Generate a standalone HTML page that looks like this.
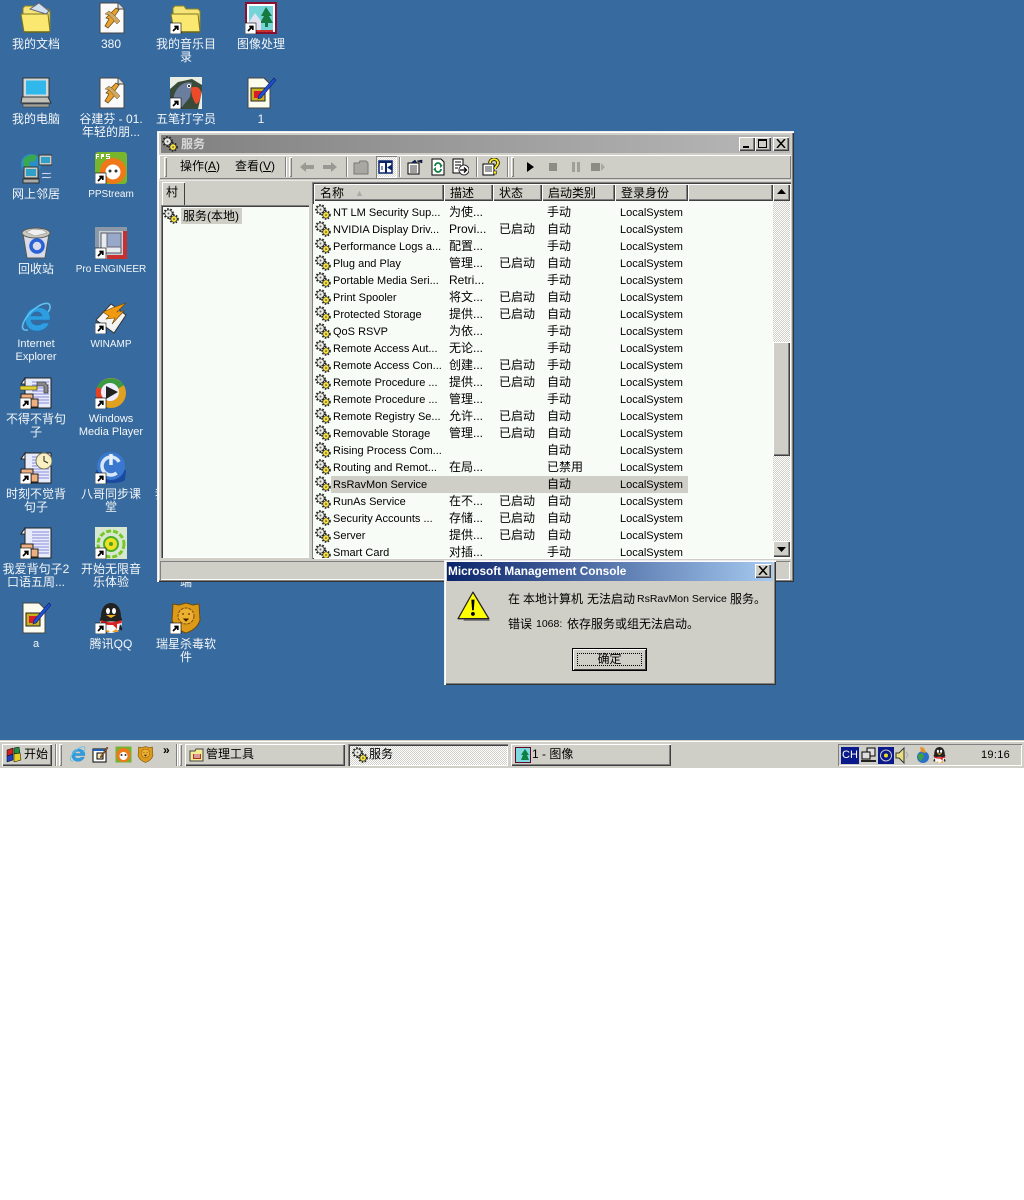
<!DOCTYPE html>
<html lang="zh"><head><meta charset="utf-8"><title>服务</title>
<style>
*{box-sizing:border-box}
html,body{margin:0;padding:0;background:#fff}
body{width:1024px;height:1200px;position:relative;overflow:hidden;font:11px/13px "Liberation Sans","WenQuanYi Zen Hei","Noto Sans CJK SC",sans-serif;color:#000}
.a{position:absolute}
#desk{left:0;top:0;width:1024px;height:740px;background:#376b9f}
.ic{position:absolute;width:74px;text-align:center;color:#f4f6f8;font-size:12px;line-height:13px}
.ic svg{position:absolute;left:21px;top:0;width:32px;height:32px}
.ic div{position:absolute;left:-2px;width:78px;top:36px;white-space:nowrap}
.up{background:#cfcfc7;box-shadow:inset 1px 1px 0 #fff,inset -1px -1px 0 #404040,inset -2px -2px 0 #808080}
.dn{box-shadow:inset 1px 1px 0 #808080,inset 2px 2px 0 #404040,inset -1px -1px 0 #fff}
#win{left:157px;top:131px;width:637px;height:451px;background:#cfcfc7;box-shadow:inset 1px 1px 0 #eee,inset 2px 2px 0 #fff,inset -1px -1px 0 #333,inset -2px -2px 0 #808080}
#tt{left:4px;top:4px;width:629px;height:18px;background:linear-gradient(90deg,#808080,#b8b8b8);color:#d8d8d8;font-weight:bold;font-size:12px;line-height:18px;padding-left:20px}
.wb{position:absolute;top:6px;width:16px;height:14px;font-size:0}
.grip{position:absolute;width:3px;height:20px;box-shadow:inset 1px 1px 0 #fff,inset -1px -1px 0 #808080}
.sep{position:absolute;width:2px;height:20px;box-shadow:inset 1px 0 0 #808080,inset -1px 0 0 #fff}
.tbi{position:absolute;width:18px;height:18px}
#list{left:156px;top:73px;width:460px;height:354px;overflow:hidden;background:#f8fcf6}
.r{position:relative;height:17px;font-size:11px;line-height:17px;white-space:nowrap}
.r svg{position:absolute;left:2px;top:0;width:16px;height:16px}
.r span{position:absolute;top:0}
.r .n,.r .l{top:1px}
.n{left:20px}.d{left:136px;font-size:12px}.s{left:186px;font-size:12px}.t{left:234px;font-size:12px}.l{left:307px}
.h{position:absolute;top:53px;height:17px;font-size:12px;line-height:18px;padding-left:6px;background:#cfcfc7;box-shadow:inset 1px 1px 0 #fff,inset -1px -1px 0 #404040,inset -2px -2px 0 #808080}
.sb{background:repeating-conic-gradient(#fff 0 25%,#d0d0c8 0 50%) 0 0/2px 2px}
#dlg{left:444px;top:560px;width:332px;height:125px;background:#cfcfc7;box-shadow:inset 1px 1px 0 #eee,inset 2px 2px 0 #fff,inset -1px -1px 0 #333,inset -2px -2px 0 #808080}
#dt{left:3px;top:2px;width:326px;height:19px;background:linear-gradient(90deg,#0a246a,#a6caf0);color:#fff;font-weight:bold;font-size:11.8px;line-height:19px;padding-left:1px}
.m{position:absolute;font-size:12px;white-space:nowrap;line-height:13px}
.m.e{font-size:10.5px}
#bar{left:0;top:740px;width:1024px;height:28px;background:#cfcfc7;box-shadow:inset 0 1px 0 #cfcfc7,inset 0 2px 0 #fff}
.task{position:absolute;top:4px;height:22px;font-size:12px;line-height:21px;padding-left:21px;white-space:nowrap}
.task svg{position:absolute;left:4px;top:3px;width:16px;height:16px}
.q{position:absolute;top:6px;width:17px;height:17px}
</style></head><body>
<svg width="0" height="0" style="position:absolute">
<defs>
<symbol id="g" viewBox="0 0 16 16"><circle cx="5.500" cy="5.500" r="4.400" fill="none" stroke="#222" stroke-width="2" stroke-dasharray="1.600 1.600"/><circle cx="5.500" cy="5.500" r="3.600" fill="#eeeee8" stroke="#333" stroke-width=".7"/><circle cx="5.500" cy="5.500" r="1" fill="#666"/><circle cx="11" cy="11" r="3.900" fill="none" stroke="#222" stroke-width="1.800" stroke-dasharray="1.500 1.400"/><circle cx="11" cy="11" r="3.200" fill="#f4e040" stroke="#333" stroke-width=".7"/><circle cx="11" cy="11" r=".8" fill="#333"/></symbol>
<symbol id="sc" viewBox="0 0 32 32"><rect x="0" y="21" width="11" height="11" fill="#fff" stroke="#000" stroke-width=".6"/><path d="M3 29l4-4M4.300 24.500h3.500v3.500" fill="none" stroke="#000" stroke-width="1.700"/></symbol>
<symbol id="fold" viewBox="0 0 32 32"><path d="M3 9V6l2-2h9l2 3h12l2 2v17H3z" fill="#f6e476" stroke="#8b8420"/><path d="M1 12h27l2 18H4z" fill="#fbe870" stroke="#7d7820"/><path d="M4 30h26" stroke="#6a6618" stroke-width="1.500"/></symbol>
<symbol id="doc" viewBox="0 0 32 32"><path d="M5 1h18l6 6v24H5z" fill="#fafafa" stroke="#444"/><path d="M23 1v6h6" fill="#ddd" stroke="#444"/><path d="M10 24l4-7-3-1 10-10 3 2-5 7 3 1-9 10z" fill="#eaa22e" stroke="#6a5020" stroke-width=".8"/><path d="M10 12l4 1 8 9 3-3-7-7-4-3z" fill="#d0a860" stroke="#6a5020" stroke-width=".5"/></symbol>
<symbol id="pic" viewBox="0 0 32 32"><rect x="1" y="1" width="30" height="30" fill="#fff" stroke="#8a1030" stroke-width="2"/><rect x="4" y="4" width="24" height="24" fill="#74d4d8"/><path d="M21 5l6 9h-3l4 7h-5v4h-3v-4h-5l4-7h-3z" fill="#167a40"/><path d="M4 20l6-9 6 8v9H4z" fill="#e0e0f0"/><rect x="4" y="28" width="24" height="2" fill="#c83030"/></symbol>
<symbol id="pc" viewBox="0 0 32 32"><path d="M3 1h26v19H3z" fill="#d4dad8" stroke="#333"/><rect x="6" y="3.500" width="20" height="14" fill="#30b8ea"/><path d="M2 20h26l3 6H1z" fill="#c0c0b8" stroke="#333"/><path d="M3 27h26v3H3z" fill="#a0a098" stroke="#333" stroke-width=".5"/></symbol>
<symbol id="bird" viewBox="0 0 32 32"><rect width="32" height="32" fill="#e8eee4"/><path d="M0 32V12L8 5l14-3 10 6v6l-4 18z" fill="#3a4a38"/><path d="M3 24C4 11 14 3 22 6l-2 14-8 10H3z" fill="#6c7e9e"/><path d="M21 11c5-3 11 0 10 7-1 5-3 9-5 9-3-4-5-10-5-16z" fill="#ec4a2a"/><circle cx="19" cy="9" r="2" fill="#ffe"/><circle cx="19" cy="9" r="1" fill="#000"/></symbol>
<symbol id="pen" viewBox="0 0 32 32"><path d="M3 1h16l6 6v24H3z" fill="#fbfbee" stroke="#444"/><path d="M6 11h14v13H6z" fill="#c8b020" stroke="#222"/><path d="M9 14h8v7H9z" fill="#dc1c28"/><path d="M13 22l3-1L31 3l-2-2-15 17z" fill="#2050d8" stroke="#102060" stroke-width=".6"/></symbol>
<symbol id="net" viewBox="0 0 32 32"><circle cx="11" cy="12" r="10" fill="#2a8ec8"/><path d="M3 8c4-5 10-7 14-4l-2 5-6 1 1 5-6 1z" fill="#3aa850"/><path d="M19 3h13v10H19z" fill="#c8ccc8" stroke="#333"/><rect x="21" y="5" width="9" height="6" fill="#30a0c8"/><path d="M4 15h14v11H4z" fill="#c8ccc8" stroke="#333"/><rect x="6" y="17" width="10" height="7" fill="#30a0c8"/><path d="M3 27h16v4H3z" fill="#aaa" stroke="#333"/><path d="M22 22c3-2 6 1 9-1M22 26c3-2 6 1 9-1" stroke="#dde" fill="none"/></symbol>
<symbol id="pps" viewBox="0 0 32 32"><rect width="32" height="32" rx="3" fill="#78b42c"/><circle cx="18" cy="19" r="13" fill="#f07818"/><circle cx="18" cy="20" r="7.500" fill="#fff"/><circle cx="15" cy="19" r="1.500" fill="#333"/><circle cx="21" cy="19" r="1.500" fill="#333"/><path d="M1 2h3v1H2v1h2v1H2v2H1zM6 2h3v3H7v2H6zM11 2h4v1h-3v1h3v3h-4V6h3V5h-3z" fill="#fff"/></symbol>
<symbol id="bin" viewBox="0 0 32 32"><path d="M3 7h26l-4 24H7z" fill="#d8dce8" stroke="#555"/><ellipse cx="16" cy="6" rx="14" ry="5" fill="#c8c8c0" stroke="#555"/><path d="M6 5l7-3 10 1 4 3-12 3z" fill="#f0f0f0" stroke="#888" stroke-width=".5"/><circle cx="17" cy="19" r="6" fill="none" stroke="#2a60d8" stroke-width="3.500"/></symbol>
<symbol id="pro" viewBox="0 0 32 32"><rect width="32" height="32" fill="#c6d0d8"/><path d="M0 0h32v4H4v28H0z" fill="#8a98a8"/><path d="M6 6h20v20H6z" fill="#e8ecee" stroke="#556"/><rect x="12" y="6" width="14" height="14" fill="#98a8c8" stroke="#667"/><path d="M28 4h4v28H12v-4h16z" fill="#c83030"/></symbol>
<symbol id="ie" viewBox="0 0 32 32"><path d="M25 18H11c0 5 7 7 12 3h6c-3 8-13 10-19 6C4 23 4 13 10 8c6-4 14-3 18 2 2 2 2 5 2 8zM11 14h11c0-5-9-6-11 0z" fill="#2e9ee0" fill-rule="evenodd" stroke="#1a70b8" stroke-width=".5"/><path d="M8 28C1 29 1 24 6 16 12 7 24-1 29 2c2 2 1 6-1 8" fill="none" stroke="#60c0f0" stroke-width="1.600"/></symbol>
<symbol id="wa" viewBox="0 0 32 32"><path d="M16 2l15 11-12 18L1 18z" fill="#f4f4f4" stroke="#333"/><path d="M31 1L17 6 8 10l6 4-3 3 9-1-3 6 12-13-7 1z" fill="#f09a10" stroke="#704000" stroke-width=".6"/></symbol>
<symbol id="sheet" viewBox="0 0 32 32"><path d="M5 1h26v30H5z" fill="#e8ecfa" stroke="#222"/><path d="M5 1L1 7h4z" fill="#fff" stroke="#222"/><path d="M12 5h17M12 8h17M12 11h17M12 14h17M12 17h17M12 20h17M12 23h17M12 26h17" stroke="#8888d8"/><rect x="1" y="17" width="12" height="7" fill="#eeb080" stroke="#222"/><rect x="11" y="22" width="7" height="8" fill="#eeb080" stroke="#222"/></symbol>
<symbol id="mp" viewBox="0 0 32 32"><circle cx="16" cy="16" r="15" fill="#e0a020"/><path d="M16 16L2 10C6 1 20-3 29 8z" fill="#3a9a40"/><path d="M16 16L2 10c-3 7 0 14 7 19z" fill="#e84020"/><circle cx="15" cy="15" r="9" fill="#eef"/><path d="M11 9l12 6-12 7z" fill="#222"/></symbol>
<symbol id="sync" viewBox="0 0 32 32"><path d="M1 18l2 10c6 4 22 4 27 0l1-10z" fill="#1a4aa0"/><circle cx="16" cy="14" r="14" fill="#3a78d0"/><circle cx="16" cy="14" r="9" fill="none" stroke="#d8e8f8" stroke-width="3.500" stroke-dasharray="44 12" stroke-dashoffset="-8"/><path d="M16 2v11" stroke="#e8f0fa" stroke-width="3.500"/></symbol>
<symbol id="music" viewBox="0 0 32 32"><rect width="32" height="32" fill="#d8e8d0"/><circle cx="16" cy="17" r="13" fill="none" stroke="#78c828" stroke-width="3" stroke-dasharray="5 2"/><circle cx="16" cy="17" r="7" fill="#f0e020" stroke="#48b028" stroke-width="2"/><circle cx="16" cy="17" r="2" fill="#48a028"/></symbol>
<symbol id="qq" viewBox="0 0 32 32"><ellipse cx="16" cy="20" rx="11" ry="11" fill="#f8f8f8"/><path d="M7 22C3 28 5 30 8 27zM25 22c4 6 2 8-1 5z" fill="#222"/><path d="M6 15C6 4 12 1 16 1s10 3 10 14c2 3 1 4-1 6-3-2-15-2-18 0-2-2-3-3-1-6z" fill="#222"/><ellipse cx="13" cy="9" rx="2" ry="3" fill="#fff"/><ellipse cx="19" cy="9" rx="2" ry="3" fill="#fff"/><path d="M11 13h10l-5 3z" fill="#f0b020"/><path d="M6 18c6 3 14 3 20 0l1 3-5 1v5l-4-4c-4 0-9 0-12-2z" fill="#d82020"/><path d="M8 30h7l-2-2zM17 30h7l-3-3z" fill="#f0a020"/></symbol>
<symbol id="lion" viewBox="0 0 32 32"><path d="M3 2l6 1 7-2 7 2 6-1 1 16c-2 7-8 11-14 13C10 29 4 25 2 18z" fill="#dc9a18" stroke="#6a4a10"/><circle cx="16" cy="14" r="8" fill="#eeb030" stroke="#7a5010" stroke-dasharray="3 1"/><path d="M12 12h2M18 12h2M14 17h4l-2 2z" stroke="#402000" fill="#402000"/></symbol>
<symbol id="warn" viewBox="0 0 32 32"><path d="M17 5l14 24H6z" fill="#777"/><path d="M15 2L1 27h29z" fill="#ff0" stroke="#222" stroke-width="1.200" stroke-linejoin="round"/><path d="M13.500 9h3l-.7 10h-1.600z" fill="#000"/><circle cx="15" cy="22.500" r="1.800" fill="#000"/></symbol>
<symbol id="fm" viewBox="0 0 16 16"><path d="M1 4h5l1-2h7v12H1z" fill="#f4ec90" stroke="#444"/><rect x="4" y="7" width="8" height="5" fill="#b03030"/><path d="M5 8h6M5 10h6" stroke="#fff"/></symbol>
<symbol id="ficon" viewBox="0 0 16 16"><rect x=".5" y=".5" width="15" height="15" fill="#80d8e0" stroke="#600828"/><path d="M10 2l4 6h-2l2 5H6l2-5H6z" fill="#108040"/></symbol>
</defs>
</svg>

<div id="desk" class="a"></div>

<div class="ic" style="left:-1px;top:2px"><svg><use href="#fold"/></svg><svg viewBox="0 0 32 32"><path d="M10 7l9-6 10 8-3 3z" fill="#cfe0f0" stroke="#667"/></svg><div>我的文档</div></div>
<div class="ic" style="left:74px;top:2px"><svg><use href="#doc"/></svg><div>380</div></div>
<div class="ic" style="left:149px;top:2px"><svg><use href="#fold"/><use href="#sc"/></svg><div>我的音乐目<br>录</div></div>
<div class="ic" style="left:224px;top:2px"><svg><use href="#pic"/><use href="#sc"/></svg><div>图像处理</div></div>

<div class="ic" style="left:-1px;top:77px"><svg><use href="#pc"/></svg><div>我的电脑</div></div>
<div class="ic" style="left:74px;top:77px"><svg><use href="#doc"/></svg><div>谷建芬 - 01.<br>年轻的朋...</div></div>
<div class="ic" style="left:149px;top:77px"><svg><use href="#bird"/><use href="#sc"/></svg><div>五笔打字员</div></div>
<div class="ic" style="left:224px;top:77px"><svg><use href="#pen"/></svg><div>1</div></div>

<div class="ic" style="left:-1px;top:152px"><svg><use href="#net"/></svg><div>网上邻居</div></div>
<div class="ic" style="left:74px;top:152px"><svg><use href="#pps"/><use href="#sc"/></svg><div style="font-size:10px">PPStream</div></div>

<div class="ic" style="left:-1px;top:227px"><svg><use href="#bin"/></svg><div>回收站</div></div>
<div class="ic" style="left:74px;top:227px"><svg><use href="#pro"/><use href="#sc"/></svg><div style="font-size:10px">Pro ENGINEER</div></div>

<div class="ic" style="left:-1px;top:302px"><svg><use href="#ie"/></svg><div style="font-size:11px">Internet<br>Explorer</div></div>
<div class="ic" style="left:74px;top:302px"><svg><use href="#wa"/><use href="#sc"/></svg><div style="font-size:10px">WINAMP</div></div>

<div class="ic" style="left:-1px;top:377px"><svg><use href="#sheet"/><use href="#sc"/></svg><svg viewBox="0 0 32 32"><path d="M0 9h17v4H0z" fill="#e0d030" stroke="#222" stroke-width=".6"/><path d="M17 5h8l3 4v7h-4V9h-7z" fill="#888" stroke="#222" stroke-width=".6"/></svg><div>不得不背句<br>子</div></div>
<div class="ic" style="left:74px;top:377px"><svg><use href="#mp"/><use href="#sc"/></svg><div style="font-size:11px">Windows<br>Media Player</div></div>

<div class="ic" style="left:-1px;top:452px"><svg><use href="#sheet"/><use href="#sc"/></svg><svg viewBox="0 0 32 32"><circle cx="24" cy="9" r="8" fill="#f8f0c0" stroke="#776"/><path d="M24 4v5l4 2" fill="none" stroke="#222"/></svg><div>时刻不觉背<br>句子</div></div>
<div class="ic" style="left:74px;top:452px"><svg><use href="#sync"/><use href="#sc"/></svg><div>八哥同步课<br>堂</div></div>
<div class="ic" style="left:149px;top:452px"><div style="left:6px;width:30px;text-align:left">我</div></div>

<div class="ic" style="left:-1px;top:527px"><svg><use href="#sheet"/><use href="#sc"/></svg><div>我爱背句子2<br>口语五周...</div></div>
<div class="ic" style="left:74px;top:527px"><svg><use href="#music"/><use href="#sc"/></svg><div>开始无限音<br>乐体验</div></div>
<div class="ic" style="left:149px;top:527px"><div style="top:49px">端</div></div>

<div class="ic" style="left:-1px;top:602px"><svg><use href="#pen"/></svg><div style="font-size:11px">a</div></div>
<div class="ic" style="left:74px;top:602px"><svg><use href="#qq"/><use href="#sc"/></svg><div>腾讯QQ</div></div>
<div class="ic" style="left:149px;top:602px"><svg><use href="#lion"/><use href="#sc"/></svg><div>瑞星杀毒软<br>件</div></div>

<div id="win" class="a">
 <div id="tt" class="a">服务</div>
 <svg class="a" style="left:5px;top:5px;width:16px;height:16px"><use href="#g"/></svg>
 <div class="wb up" style="left:582px"><div class="a" style="left:4px;top:9px;width:6px;height:2px;background:#000"></div></div>
 <div class="wb up" style="left:598px"><div class="a" style="left:3px;top:2px;width:9px;height:9px;border:1px solid #000;border-top-width:2px"></div></div>
 <div class="wb up" style="left:616px"><svg class="a" style="left:3px;top:2px;width:10px;height:9px" viewBox="0 0 10 9"><path d="M1 0l8 9M9 0L1 9" stroke="#000" stroke-width="1.500"/></svg></div>

 <div class="a" style="left:2px;top:24px;width:632px;height:24px;box-shadow:inset 1px 1px 0 #fff,inset -1px -1px 0 #808080"></div>
 <div class="grip" style="left:7px;top:26px"></div>
 <div class="a" style="left:23px;top:29px;font-size:12px;white-space:nowrap">操作(<u>A</u>)</div>
 <div class="a" style="left:78px;top:29px;font-size:12px;white-space:nowrap">查看(<u>V</u>)</div>
 <div class="sep" style="left:128px;top:26px"></div>
 <div class="grip" style="left:132px;top:26px"></div>
 <svg class="tbi" style="left:141px;top:27px" viewBox="0 0 18 18"><path d="M2 9l6-5v3h8v4H8v3z" fill="#9a9a94"/></svg>
 <svg class="tbi" style="left:164px;top:27px" viewBox="0 0 18 18"><path d="M16 9l-6-5v3H2v4h8v3z" fill="#9a9a94"/></svg>
 <div class="sep" style="left:189px;top:26px"></div>
 <svg class="tbi" style="left:195px;top:27px" viewBox="0 0 18 18"><path d="M2 5h5l1-2h6l2 2v11H2z" fill="#a8a8a0" stroke="#777"/></svg>
 <div class="a" style="left:219px;top:25px;width:21px;height:22px;background:repeating-conic-gradient(#fff 0 25%,#d8d8d0 0 50%) 0 0/2px 2px;box-shadow:inset 1px 1px 0 #808080,inset -1px -1px 0 #fff"></div>
 <svg class="tbi" style="left:220px;top:27px" viewBox="0 0 18 18"><rect x="2" y="3" width="13" height="12" fill="#fff" stroke="#0a246a" stroke-width="1.500"/><path d="M2 3h13v2H2zM8 3h2v12H8z" fill="#0a246a"/><path d="M5 8v4M14 7.500l-3 2 3 2z" stroke="#0a246a" fill="#0a246a"/></svg>
 <div class="sep" style="left:242px;top:26px"></div>
 <svg class="tbi" style="left:249px;top:27px" viewBox="0 0 18 18"><path d="M2 5h11v11H2z" fill="#fff" stroke="#000"/><path d="M4 8h7M4 10h7M4 12h7M4 14h7" stroke="#000" stroke-width=".8"/><path d="M5 5l4-3 2 3M11 3l5-1v3z" fill="#0a246a" stroke="#000" stroke-width=".5"/></svg>
 <svg class="tbi" style="left:272px;top:27px" viewBox="0 0 18 18"><path d="M3 1h9l3 3v13H3z" fill="#fff" stroke="#000"/><path d="M6 8a3 3 0 0 1 6 0l1-1M12 11a3 3 0 0 1-6 0l-1 1" fill="none" stroke="#108040" stroke-width="1.800"/></svg>
 <svg class="tbi" style="left:294px;top:27px" viewBox="0 0 18 18"><path d="M2 1h10v14H2z" fill="#fff" stroke="#000"/><path d="M4 4h6M4 7h6M4 10h3" stroke="#000"/><circle cx="13" cy="12" r="5" fill="#fff" stroke="#333"/><path d="M9 12h6M13 9.500l2.500 2.500-2.500 2.500" stroke="#000" fill="none" stroke-width="1.300"/></svg>
 <div class="sep" style="left:319px;top:26px"></div>
 <svg class="tbi" style="left:325px;top:27px" viewBox="0 0 18 18"><path d="M1 6h11v11H1z" fill="#fff" stroke="#000"/><path d="M3 9h7M3 11h7M3 13h7" stroke="#000" stroke-width=".8"/><path d="M8 5c0-5 8-5 8 0 0 3-3 3-3 6" fill="none" stroke="#000" stroke-width="3.400"/><path d="M8 5c0-5 8-5 8 0 0 3-3 3-3 6" fill="none" stroke="#f8e820" stroke-width="2"/><rect x="11.500" y="13" width="3" height="3" fill="#f8e820" stroke="#000" stroke-width=".5"/></svg>
 <div class="sep" style="left:350px;top:26px"></div>
 <div class="grip" style="left:354px;top:26px"></div>
 <svg class="tbi" style="left:364px;top:27px" viewBox="0 0 18 18"><path d="M6 4l7 5-7 5z" fill="#000"/></svg>
 <svg class="tbi" style="left:387px;top:27px" viewBox="0 0 18 18"><rect x="5" y="5" width="8" height="8" fill="#8c8c86"/></svg>
 <svg class="tbi" style="left:410px;top:27px" viewBox="0 0 18 18"><path d="M5 4h3v10H5zM10 4h3v10h-3z" fill="#a0a09a"/></svg>
 <svg class="tbi" style="left:432px;top:27px" viewBox="0 0 18 18"><path d="M2 5h9v8H2z" fill="#8c8c86"/><path d="M12 5l4 4-4 4z" fill="#a8a8a2"/></svg>

 <div class="a" style="left:2px;top:49px;width:632px;height:1px;background:#e8e8e4"></div>
 <div class="a up" style="left:5px;top:51px;width:23px;height:23px;background:#cfcfc7;box-shadow:inset 1px 1px 0 #fff,inset -1px 0 0 #404040;font-size:12px;line-height:21px;padding-left:4px">村</div>
 <div class="a dn" style="left:4px;top:74px;width:148px;height:353px;background:#f8fcf6">
  <svg class="a" style="left:2px;top:3px;width:16px;height:16px"><use href="#g"/></svg>
  <div class="a" style="left:20px;top:3px;width:61px;height:16px;background:#cfcfc7;font-size:12px;line-height:16px;padding-left:2px;white-space:nowrap">服务(本地)</div>
 </div>

 <div class="a dn" style="left:155px;top:51px;width:479px;height:377px;background:#f8fcf6"></div>
 <div id="list" class="a">
  <div class="a" style="left:18px;top:272px;width:357px;height:17px;background:#cfcfc7"></div>
  <div class="a" style="left:0;top:0;width:100%">
  <div class="r"><svg><use href="#g"/></svg><span class="n">NT LM Security Sup...</span><span class="d">为使...</span><span class="t">手动</span><span class="l">LocalSystem</span></div>
  <div class="r"><svg><use href="#g"/></svg><span class="n">NVIDIA Display Driv...</span><span class="d">Provi...</span><span class="s">已启动</span><span class="t">自动</span><span class="l">LocalSystem</span></div>
  <div class="r"><svg><use href="#g"/></svg><span class="n">Performance Logs a...</span><span class="d">配置...</span><span class="t">手动</span><span class="l">LocalSystem</span></div>
  <div class="r"><svg><use href="#g"/></svg><span class="n">Plug and Play</span><span class="d">管理...</span><span class="s">已启动</span><span class="t">自动</span><span class="l">LocalSystem</span></div>
  <div class="r"><svg><use href="#g"/></svg><span class="n">Portable Media Seri...</span><span class="d">Retri...</span><span class="t">手动</span><span class="l">LocalSystem</span></div>
  <div class="r"><svg><use href="#g"/></svg><span class="n">Print Spooler</span><span class="d">将文...</span><span class="s">已启动</span><span class="t">自动</span><span class="l">LocalSystem</span></div>
  <div class="r"><svg><use href="#g"/></svg><span class="n">Protected Storage</span><span class="d">提供...</span><span class="s">已启动</span><span class="t">自动</span><span class="l">LocalSystem</span></div>
  <div class="r"><svg><use href="#g"/></svg><span class="n">QoS RSVP</span><span class="d">为依...</span><span class="t">手动</span><span class="l">LocalSystem</span></div>
  <div class="r"><svg><use href="#g"/></svg><span class="n">Remote Access Aut...</span><span class="d">无论...</span><span class="t">手动</span><span class="l">LocalSystem</span></div>
  <div class="r"><svg><use href="#g"/></svg><span class="n">Remote Access Con...</span><span class="d">创建...</span><span class="s">已启动</span><span class="t">手动</span><span class="l">LocalSystem</span></div>
  <div class="r"><svg><use href="#g"/></svg><span class="n">Remote Procedure ...</span><span class="d">提供...</span><span class="s">已启动</span><span class="t">自动</span><span class="l">LocalSystem</span></div>
  <div class="r"><svg><use href="#g"/></svg><span class="n">Remote Procedure ...</span><span class="d">管理...</span><span class="t">手动</span><span class="l">LocalSystem</span></div>
  <div class="r"><svg><use href="#g"/></svg><span class="n">Remote Registry Se...</span><span class="d">允许...</span><span class="s">已启动</span><span class="t">自动</span><span class="l">LocalSystem</span></div>
  <div class="r"><svg><use href="#g"/></svg><span class="n">Removable Storage</span><span class="d">管理...</span><span class="s">已启动</span><span class="t">自动</span><span class="l">LocalSystem</span></div>
  <div class="r"><svg><use href="#g"/></svg><span class="n">Rising Process Com...</span><span class="t">自动</span><span class="l">LocalSystem</span></div>
  <div class="r"><svg><use href="#g"/></svg><span class="n">Routing and Remot...</span><span class="d">在局...</span><span class="t">已禁用</span><span class="l">LocalSystem</span></div>
  <div class="r"><svg><use href="#g"/></svg><span class="n">RsRavMon Service</span><span class="t">自动</span><span class="l">LocalSystem</span></div>
  <div class="r"><svg><use href="#g"/></svg><span class="n">RunAs Service</span><span class="d">在不...</span><span class="s">已启动</span><span class="t">自动</span><span class="l">LocalSystem</span></div>
  <div class="r"><svg><use href="#g"/></svg><span class="n">Security Accounts ...</span><span class="d">存储...</span><span class="s">已启动</span><span class="t">自动</span><span class="l">LocalSystem</span></div>
  <div class="r"><svg><use href="#g"/></svg><span class="n">Server</span><span class="d">提供...</span><span class="s">已启动</span><span class="t">自动</span><span class="l">LocalSystem</span></div>
  <div class="r"><svg><use href="#g"/></svg><span class="n">Smart Card</span><span class="d">对插...</span><span class="t">手动</span><span class="l">LocalSystem</span></div>
  </div>
 </div>
 <div class="h" style="left:157px;width:130px">名称<span class="a" style="left:41px;top:0;color:#aaa;font-size:9px">▲</span></div>
 <div class="h" style="left:287px;width:49px">描述</div>
 <div class="h" style="left:336px;width:49px">状态</div>
 <div class="h" style="left:385px;width:73px">启动类别</div>
 <div class="h" style="left:458px;width:73px">登录身份</div>
 <div class="h" style="left:531px;width:85px"></div>
 <div class="a sb" style="left:616px;top:53px;width:17px;height:373px"></div>
 <div class="a up" style="left:616px;top:53px;width:17px;height:17px"><svg class="a" style="left:4px;top:5px;width:9px;height:6px" viewBox="0 0 9 6"><path d="M4.500 0L9 5H0z"/></svg></div>
 <div class="a up" style="left:616px;top:211px;width:17px;height:114px"></div>
 <div class="a up" style="left:616px;top:410px;width:17px;height:16px"><svg class="a" style="left:4px;top:5px;width:9px;height:6px" viewBox="0 0 9 6"><path d="M4.500 6L9 1H0z"/></svg></div>
 <div class="a" style="left:3px;top:430px;width:630px;height:19px;box-shadow:inset 1px 1px 0 #808080,inset -1px -1px 0 #fff"></div>
</div>

<div id="dlg" class="a">
 <div id="dt" class="a">Microsoft Management Console</div>
 <div class="a up" style="left:311px;top:4px;width:16px;height:14px"><svg class="a" style="left:3px;top:2px;width:10px;height:9px" viewBox="0 0 10 9"><path d="M1 0l8 9M9 0L1 9" stroke="#000" stroke-width="1.500"/></svg></div>
 <svg class="a" style="left:13px;top:30px;width:34px;height:34px"><use href="#warn"/></svg>
 <span class="m" style="left:64px;top:33px">在</span>
 <span class="m" style="left:79px;top:33px">本地计算机</span>
 <span class="m" style="left:143px;top:33px">无法启动</span>
 <span class="m e" style="left:193px;top:33px">RsRavMon Service</span>
 <span class="m" style="left:286px;top:33px">服务。</span>
 <span class="m" style="left:64px;top:58px">错误</span>
 <span class="m e" style="left:92px;top:58px">1068:</span>
 <span class="m" style="left:123px;top:58px">依存服务或组无法启动。</span>
 <div class="a" style="left:128px;top:88px;width:75px;height:23px;background:#cfcfc7;border:1px solid #000;box-shadow:inset 1px 1px 0 #fff,inset -1px -1px 0 #404040;text-align:center;font-size:12px;line-height:20px">确定<div class="a" style="left:4px;top:4px;width:65px;height:13px;border:1px dotted #000"></div></div>
</div>

<div id="bar" class="a">
 <div class="a up" style="left:2px;top:4px;width:50px;height:22px;font-size:12px;line-height:21px;padding-left:22px">开始<svg class="a" style="left:4px;top:3px;width:17px;height:16px" viewBox="0 0 17 16"><path d="M1 3l6-2v6L1 9z" fill="#d02020" stroke="#000" stroke-width=".5"/><path d="M1 9l6-2v6l-6 2z" fill="#2040c0" stroke="#000" stroke-width=".5"/><path d="M8 1l5-1 1 6-6 1z" fill="#209040" stroke="#000" stroke-width=".5"/><path d="M8 7l6-1 1 7-7 2z" fill="#e8d020" stroke="#000" stroke-width=".5"/></svg></div>
 <div class="sep" style="left:55px;top:4px;height:22px"></div>
 <div class="grip" style="left:59px;top:4px;height:22px"></div>
 <svg class="q" style="left:69px"><use href="#ie" width="17" height="17"/></svg>
 <svg class="q" style="left:92px" viewBox="0 0 17 17"><path d="M1 3h13v13H1z" fill="#fff" stroke="#000"/><rect x="1" y="3" width="13" height="2" fill="#2060b0"/><path d="M5 7h6v6H5z" fill="#f0e8c0" stroke="#000"/><path d="M8 11l7-10 1 1-7 10z" fill="#c06020" stroke="#000" stroke-width=".4"/></svg>
 <svg class="q" style="left:115px" viewBox="0 0 17 17"><rect x=".5" y=".5" width="16" height="16" fill="#78b030"/><circle cx="8.500" cy="9" r="7" fill="#f07818"/><circle cx="8.500" cy="10" r="4" fill="#fff"/><circle cx="6.500" cy="9" r="1" fill="#333"/><circle cx="10.500" cy="9" r="1" fill="#333"/></svg>
 <svg class="q" style="left:137px"><use href="#lion" width="17" height="17"/></svg>
 <div class="a" style="left:163px;top:4px;font-size:12px;line-height:13px;font-weight:bold">»</div>
 <div class="sep" style="left:176px;top:4px;height:22px"></div>
 <div class="grip" style="left:179px;top:4px;height:22px"></div>
 <div class="task up" style="left:185px;width:160px"><svg><use href="#fm"/></svg>管理工具</div>
 <div class="task dn sb" style="left:348px;width:160px"><svg><use href="#g"/></svg>服务</div>
 <div class="task up" style="left:511px;width:160px"><svg><use href="#ficon"/></svg>1 - 图像</div>
 <div class="a" style="left:838px;top:4px;width:184px;height:22px;box-shadow:inset 1px 1px 0 #808080,inset -1px -1px 0 #fff"></div>
 <div class="a" style="left:841px;top:7px;width:18px;height:17px;background:#0a1a8a;color:#fff;font-size:11px;line-height:17px;text-align:center">CH</div>
 <svg class="a" style="left:860px;top:7px;width:17px;height:17px" viewBox="0 0 17 17"><path d="M7 1h8v8H7z" fill="#ddd" stroke="#000"/><path d="M2 5h8v7H2z" fill="#ddd" stroke="#000"/><path d="M1 13h15v2H1z" fill="#222"/></svg>
 <svg class="a" style="left:878px;top:7px;width:16px;height:17px" viewBox="0 0 16 17"><rect width="16" height="17" fill="#0a1a8a"/><circle cx="8" cy="8.500" r="2" fill="#f0e020"/><circle cx="8" cy="8.500" r="5.500" fill="none" stroke="#c8c8c8"/></svg>
 <svg class="a" style="left:895px;top:7px;width:17px;height:17px" viewBox="0 0 17 17"><path d="M1 6h3l5-5v15l-5-5H1z" fill="#e8e080" stroke="#333"/><path d="M11 5l2 3-2 3" fill="none" stroke="#aaa"/></svg>
 <svg class="a" style="left:914px;top:7px;width:17px;height:17px" viewBox="0 0 17 17"><circle cx="9" cy="10" r="6" fill="#2a70c8"/><path d="M4 8c3-3 5-2 6 1l-3 5c-2-1-3-3-3-6z" fill="#40a040"/><path d="M6 0l4 1 2 5-5-1z" fill="#e89020"/></svg>
 <svg class="a" style="left:931px;top:6px;width:17px;height:18px"><use href="#qq" width="17" height="18"/></svg>
 <div class="a" style="left:981px;top:9px;font-size:11px;letter-spacing:.3px">19:16</div>
</div>
</body></html>
